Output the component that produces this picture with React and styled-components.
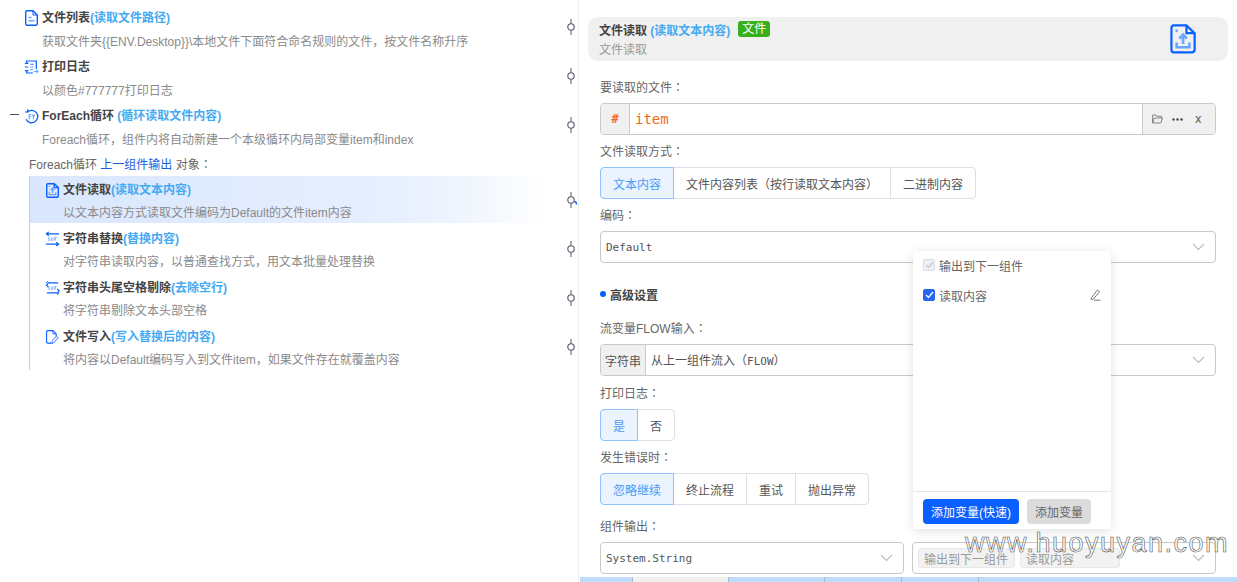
import React from 'react';
import styled, { createGlobalStyle } from 'styled-components';

const SANS = '"Liberation Sans", "Noto Sans CJK SC", sans-serif';
const MONO = '"DejaVu Sans Mono", "Noto Sans CJK SC", monospace';
const BLUE = '#0a5fff';
const LIGHT = '#6aa6ff';

const Global = createGlobalStyle`
  html, body { margin: 0; padding: 0; height: 582px; overflow: hidden; background: #fff; }
  body { font-family: ${SANS}; font-size: 12px; color: #555; }
  * { box-sizing: border-box; }
`;

const Page = styled.div`
  position: relative;
  display: flex;
  width: 1237px;
  height: 582px;
  overflow: hidden;
`;

/* ---------- left tree ---------- */
const TreePane = styled.div`
  position: relative;
  flex: 0 0 579px;
  height: 582px;
  padding-top: 7px;
  border-right: 1px solid #eeeeee;
`;
const TopRow = styled.div`
  display: flex;
  flex-direction: column;
  gap: 4px;
  margin-bottom: ${p => (p.$loop ? '1px' : '5px')};
`;
const TitleLine = styled.div`
  display: flex;
  align-items: center;
  height: 20px;
  padding-top: 2px;
  line-height: 18px;
  white-space: nowrap;
`;
const Gutter = styled.span`
  flex: 0 0 24px;
  display: flex;
  justify-content: flex-end;
  padding-right: 5px;
`;
const Dash = styled.i`
  display: block;
  width: 9px;
  height: 1px;
  background: #555;
  margin-top: -2px;
`;
const IconSlot = styled.span`
  flex: 0 0 18px;
  display: flex;
  align-items: center;
  height: 16px;
  padding-left: ${p => p.$pad || 0}px;
`;
const Title = styled.b`
  font-weight: 700;
  color: #444;
`;
const Hint = styled.span`
  font-weight: 700;
  color: #45aaf2;
`;
const Desc = styled.div`
  height: 20px;
  line-height: 22px;
  padding-left: ${p => p.$indent}px;
  color: #8a8a8a;
  white-space: nowrap;
`;
const LoopLabel = styled.div`
  height: 20px;
  line-height: 22px;
  margin: 5px 0 2px 29px;
  color: #666;
`;
const LoopLink = styled.span`
  color: #1a5fe0;
`;
const Colon = styled.span`
  font-family: "Noto Sans CJK TC", sans-serif;
  line-height: 0;
`;
const Children = styled.div`
  margin-left: 29px;
  width: 516px;
  border-left: 1px solid #b9cdf5;
`;
const ChildRow = styled.div`
  display: flex;
  flex-direction: column;
  gap: 3px;
  height: 47px;
  margin-bottom: 2px;
  padding-top: 3px;
  background: ${p => (p.$active ? 'linear-gradient(90deg, #d9e6fd 0%, #e6effe 70%, #f3f7fe 88%, #ffffff 100%)' : 'transparent')};
`;
const ChildTitle = styled(TitleLine)`
  padding-left: 15px;
`;
const Handle = styled.svg`
  position: absolute;
  left: ${p => p.$x}px;
  top: ${p => p.$y - 8}px;
`;

/* ---------- right form ---------- */
const FormPane = styled.div`
  flex: 1;
  min-width: 0;
  padding-top: 17px;
  display: flex;
  flex-direction: column;
`;
const Header = styled.div`
  display: flex;
  justify-content: space-between;
  align-items: center;
  margin: 0 9px;
  height: 44px;
  padding: 0 32px 0 11px;
  background: #f0f0f0;
  border-radius: 10px;
`;
const HeaderText = styled.div`
  display: flex;
  flex-direction: column;
  gap: 2px;
`;
const HeaderTitle = styled.div`
  display: flex;
  align-items: center;
  height: 20px;
  gap: 8px;
`;
const Tag = styled.span`
  display: inline-block;
  height: 16px;
  line-height: 16px;
  padding: 0 4px;
  border-radius: 3px;
  font-size: 12px;
  color: #fff;
  background: #38b01c;
`;
const HeaderSub = styled.div`
  color: #9a9a9a;
  line-height: 18px;
`;
const Form = styled.div`
  padding: 16px 21px 0 21px;
  display: flex;
  flex-direction: column;
`;
const Label = styled.div`
  height: 20px;
  line-height: 22px;
  color: #666;
  margin-top: ${p => p.$top || 0}px;
  margin-bottom: 6px;
`;
const Group = styled.div`
  display: flex;
  align-items: stretch;
  height: 32px;
  border: 1px solid #c9c9c9;
  border-radius: 4px;
  background: #fff;
  overflow: hidden;
`;
const HalfGroup = styled(Group)`
  flex: 1;
  min-width: 0;
`;
const Addon = styled.div`
  flex: 0 0 ${p => p.$w}px;
  display: flex;
  align-items: center;
  justify-content: center;
  background: #f0f0f0;
  color: ${p => p.$color || '#555'};
  font-family: ${p => (p.$mono ? MONO : SANS)};
  font-weight: ${p => (p.$mono ? 700 : 400)};
  border-right: 1px solid #c9c9c9;
`;
const ActionAddon = styled.div`
  flex: 0 0 73px;
  display: flex;
  align-items: center;
  gap: 9px;
  padding-left: 9px;
  background: #f0f0f0;
  color: #555;
  border-left: 1px solid #c9c9c9;
`;
const CodeInput = styled.div`
  flex: 1;
  display: flex;
  align-items: center;
  padding-left: 5px;
  font-family: ${MONO};
  font-size: 14px;
  color: #f2691f;
`;
const SelectBox = styled.div`
  position: relative;
  flex: 1;
  min-width: 0;
  display: flex;
  align-items: center;
  gap: 5px;
  padding: 0 5px;
  font-family: ${MONO};
  font-size: 11px;
  color: #555;
  white-space: pre;
`;
const FlowText = styled.span`
  margin-top: -2px;
  font-family: ${SANS};
  font-size: 12px;
`;
const FlowLatin = styled.span`
  font-family: ${MONO};
  font-size: 11px;
`;
const Chevron = styled.svg`
  margin-left: auto;
  margin-right: 5px;
  flex: none;
`;
const Radios = styled.div`
  display: inline-flex;
  align-self: flex-start;
  height: 32px;
`;
const Radio = styled.div`
  width: ${p => p.$w}px;
  display: flex;
  align-items: center;
  justify-content: center;
  border: 1px solid ${p => (p.$on ? '#8fc1fb' : '#dcdfe6')};
  margin-left: ${p => (p.$first ? 0 : -1)}px;
  position: relative;
  z-index: ${p => (p.$on ? 1 : 0)};
  background: ${p => (p.$on ? '#ebf3ff' : '#fff')};
  color: ${p => (p.$on ? '#4a9bf7' : '#555')};
  border-radius: ${p => (p.$first ? '4px 0 0 4px' : p.$last ? '0 4px 4px 0' : '0')};
`;
const Section = styled.div`
  display: flex;
  align-items: center;
  gap: 4px;
  height: 20px;
  margin: 21px 0 14px;
  font-weight: 700;
  color: #444;
`;
const Dot = styled.i`
  width: 6px;
  height: 6px;
  border-radius: 50%;
  background: ${BLUE};
`;
const TwoCols = styled.div`
  display: flex;
  gap: 8px;
`;
const OutTag = styled.span`
  display: inline-flex;
  align-items: center;
  height: 20px;
  padding: 0 5px;
  background: #f2f2f2;
  border: 1px solid #e8e8e8;
  border-radius: 3px;
  font-family: ${SANS};
  font-size: 12px;
  color: #999;
  width: ${p => p.$w}px;
`;
const Bottom = styled.div`
  display: flex;
  height: 5px;
  margin: 3px 0 0 1px;
  background: #bfdcfa;
`;
const BottomTab = styled.div`
  flex: 0 0 ${p => p.$w}px;
  background: ${p => (p.$grey ? '#f0f0f0' : 'transparent')};
  border-right: 1px solid #a9bcd0;
`;

/* ---------- popover ---------- */
const Popover = styled.div`
  position: absolute;
  left: 913px;
  top: 251px;
  width: 198px;
  height: 278px;
  display: flex;
  flex-direction: column;
  background: #fff;
  border-radius: 4px;
  box-shadow: 0 2px 12px rgba(0, 0, 0, 0.12);
  z-index: 3;
`;
const PopBody = styled.div`
  flex: 1;
  padding: 4px 10px 0;
`;
const CheckRow = styled.div`
  display: flex;
  align-items: center;
  gap: 4px;
  height: 20px;
  margin-bottom: 10px;
  color: #666;
`;
const Box = styled.span`
  flex: none;
  width: 12px;
  height: 12px;
  border-radius: 2px;
  display: flex;
  align-items: center;
  justify-content: center;
  background: ${p => (p.$disabled ? '#eef0f5' : '#2468f2')};
  border: 1px solid ${p => (p.$disabled ? '#d9dce6' : '#2468f2')};
`;
const EditIcon = styled.svg`
  margin-left: auto;
`;
const PopFoot = styled.div`
  display: flex;
  gap: 8px;
  height: 38px;
  padding: 7px 10px 0;
  border-top: 1px solid #e3e3e3;
`;
const PopButton = styled.div`
  height: 25px;
  width: ${p => p.$w}px;
  display: flex;
  align-items: center;
  justify-content: center;
  border-radius: 4px;
  background: ${p => (p.$primary ? BLUE : '#dcdcdc')};
  color: ${p => (p.$primary ? '#fff' : '#666')};
`;
const Watermark = styled.div`
  position: absolute;
  left: 965px;
  top: 527px;
  font-family: "Liberation Sans", sans-serif;
  font-size: 27px;
  line-height: 32px;
  letter-spacing: 1.5px;
  color: #fff;
  -webkit-text-stroke: 0.6px #555;
  white-space: nowrap;
  z-index: 4;
`;

/* ---------- icons ---------- */
const DocIcon = () => (
  <svg width="13" height="16" viewBox="0 0 13 16" fill="none">
    <path d="M2 .7h6l4.300 4.300v8.600a1.500 1.500 0 0 1-1.500 1.600H2A1.500 1.500 0 0 1 .7 13.600V2A1.400 1.400 0 0 1 2 .7Z" stroke={BLUE} strokeWidth="1.400" />
    <path d="M3.500 7.500h3M3.500 10.800h6" stroke={LIGHT} strokeWidth="1.400" />
    <path d="M8 1v4h4" stroke={BLUE} strokeWidth="1" />
  </svg>
);
const LogIcon = () => (
  <svg width="15" height="16" viewBox="0 0 17 16" fill="none">
    <path d="M3 4V1.200h11v9" stroke={BLUE} strokeWidth="1.400" />
    <path d="M1 4h4M1 8h4M1 12h4" stroke={BLUE} strokeWidth="1.400" />
    <path d="M3 12v2.800h7" stroke={BLUE} strokeWidth="1.400" />
    <path d="M7 5h4M7 8h4M7 11h3" stroke={LIGHT} strokeWidth="1.400" />
    <path d="M11 13h5M14.200 11.200 16 13l-1.800 1.800" stroke={LIGHT} strokeWidth="1.200" />
  </svg>
);
const LoopIcon = () => (
  <svg width="15" height="15" viewBox="0 0 16 16" fill="none">
    <path d="M3.300 3.500A6.600 6.600 0 1 1 2.200 11" stroke={BLUE} strokeWidth="1.400" />
    <path d="M1 3.200h3v-3" stroke={BLUE} strokeWidth="1.300" />
    <path d="M5.500 11V5.800h2.400M5.500 8.200h2M10 5.500V11M8.700 7h3" stroke={LIGHT} strokeWidth="1.200" />
  </svg>
);
const ReadIcon = ({ size = 15, w = 1.4 }) => (
  <svg width={size * 0.87} height={size} viewBox="0 0 13 15" fill="none">
    <path d="M1.800.7h6.400l4.100 3.900v8.200a1.400 1.400 0 0 1-1.400 1.400H1.800A1.200 1.200 0 0 1 .7 12.800V2A1.200 1.200 0 0 1 1.800.7Z" stroke={BLUE} strokeWidth={w} />
    <path d="M8.200 1v3.600h3.800" stroke={BLUE} strokeWidth={w} />
    <circle cx="3.300" cy="3.400" r=".7" fill={LIGHT} />
    <path d="M6.500 10V5.400M4.600 7.300l1.900-2 1.900 2M3.300 9.200v2.400h6.400V9.200" stroke={LIGHT} strokeWidth="1.300" />
  </svg>
);
const ReplaceIcon = ({ trim }) => (
  <svg width="15" height="16" viewBox="0 0 16 16" fill="none">
    {trim ? (
      <>
        <path d="M14 2.500H3.500L1.600 5l2 2" stroke={BLUE} strokeWidth="1.300" />
        <path d="M2 13.200h11.500L15 11l-2-2" stroke={BLUE} strokeWidth="1.300" />
        <path d="M1 2.500 3 .8M13 15l2-1.800" stroke={BLUE} strokeWidth="1" />
      </>
    ) : (
      <>
        <path d="M15 2.500H1.500M4 .5l-2.500 2L4 4.500" stroke={BLUE} strokeWidth="1.300" />
        <path d="M1 13.500h13.500M12 11.500l2.500 2-2.500 2" stroke={BLUE} strokeWidth="1.300" />
      </>
    )}
    <path d="M5 6.500H3.500v1.500H5v1.500H3.500M7 6.500v3h1.500v-3M10.500 5.500v4M12.500 6.500h-1.500v3" stroke={LIGHT} strokeWidth=".8" />
  </svg>
);
const WriteIcon = () => (
  <svg width="13" height="16" viewBox="0 0 15 16" fill="none">
    <path d="M8 15H2a1.300 1.300 0 0 1-1.300-1.300V2A1.300 1.300 0 0 1 2 .7h6l3.800 3.800V7" stroke={BLUE} strokeWidth="1.300" />
    <path d="M8 1v3.500h3.500" stroke={BLUE} strokeWidth="1" />
    <path d="M7 14.500l.5-2.500 4.500-5 2 2-4.500 5Z" stroke={LIGHT} strokeWidth="1.300" />
  </svg>
);
const Chev = () => (
  <Chevron width="13" height="8" viewBox="0 0 13 8" fill="none">
    <path d="M1 1l5.500 5.500L12 1" stroke="#b8bcc4" strokeWidth="1.100" />
  </Chevron>
);
const NodeHandle = ({ y, tail }) => (
  <Handle $x={567} $y={y} width="12" height="16" viewBox="0 0 12 16" fill="none">
    <path d="M4 0v4.500M4 11.500V16" stroke="#556" strokeWidth="1" />
    <circle cx="4" cy="8" r="3.200" stroke="#556" strokeWidth="1.100" fill="#fff" />
    {tail && <path d="M7.500 9.500c1.500 0 2 1 2 3" stroke={BLUE} strokeWidth="1.400" />}
  </Handle>
);

const Tree = () => (
  <TreePane>
    <TopRow>
      <TitleLine>
        <Gutter />
        <IconSlot $pad={1}><DocIcon /></IconSlot>
        <Title>文件列表</Title><Hint>(读取文件路径)</Hint>
      </TitleLine>
      <Desc $indent={42}>{'获取文件夹{{ENV.Desktop}}\\本地文件下面符合命名规则的文件，按文件名称升序'}</Desc>
    </TopRow>
    <TopRow>
      <TitleLine>
        <Gutter />
        <IconSlot><LogIcon /></IconSlot>
        <Title>打印日志</Title>
      </TitleLine>
      <Desc $indent={42}>以颜色#777777打印日志</Desc>
    </TopRow>
    <TopRow $loop>
      <TitleLine>
        <Gutter><Dash /></Gutter>
        <IconSlot><LoopIcon /></IconSlot>
        <Title>ForEach循环&nbsp;</Title><Hint>(循环读取文件内容)</Hint>
      </TitleLine>
      <Desc $indent={42}>Foreach循环，组件内将自动新建一个本级循环内局部变量item和index</Desc>
    </TopRow>
    <LoopLabel>Foreach循环 <LoopLink>上一组件输出</LoopLink> 对象<Colon>：</Colon></LoopLabel>
    <Children>
      <ChildRow $active>
        <ChildTitle>
          <IconSlot $pad={1}><ReadIcon /></IconSlot>
          <Title>文件读取</Title><Hint>(读取文本内容)</Hint>
        </ChildTitle>
        <Desc $indent={33}>以文本内容方式读取文件编码为Default的文件item内容</Desc>
      </ChildRow>
      <ChildRow>
        <ChildTitle>
          <IconSlot><ReplaceIcon /></IconSlot>
          <Title>字符串替换</Title><Hint>(替换内容)</Hint>
        </ChildTitle>
        <Desc $indent={33}>对字符串读取内容，以普通查找方式，用文本批量处理替换</Desc>
      </ChildRow>
      <ChildRow>
        <ChildTitle>
          <IconSlot><ReplaceIcon trim /></IconSlot>
          <Title>字符串头尾空格剔除</Title><Hint>(去除空行)</Hint>
        </ChildTitle>
        <Desc $indent={33}>将字符串剔除文本头部空格</Desc>
      </ChildRow>
      <ChildRow>
        <ChildTitle>
          <IconSlot $pad={1}><WriteIcon /></IconSlot>
          <Title>文件写入</Title><Hint>(写入替换后的内容)</Hint>
        </ChildTitle>
        <Desc $indent={33}>将内容以Default编码写入到文件item，如果文件存在就覆盖内容</Desc>
      </ChildRow>
    </Children>
    {[27, 76, 125, 200, 249, 298, 347].map((y, i) => (
      <NodeHandle key={y} y={y} tail={i === 3} />
    ))}
  </TreePane>
);

const RadioSet = ({ items }) => (
  <Radios>
    {items.map(([text, w], i) => (
      <Radio key={text} $w={w} $on={i === 0} $first={i === 0} $last={i === items.length - 1}>{text}</Radio>
    ))}
  </Radios>
);

const Right = () => (
  <FormPane>
    <Header>
      <HeaderText>
        <HeaderTitle>
          <span><Title>文件读取</Title>&nbsp;<Hint>(读取文本内容)</Hint></span>
          <Tag>文件</Tag>
        </HeaderTitle>
        <HeaderSub>文件读取</HeaderSub>
      </HeaderText>
      <ReadIcon size={30} w={1.1} />
    </Header>
    <Form>
      <Label>要读取的文件<Colon>：</Colon></Label>
      <Group>
        <Addon $w={29} $mono $color="#f2691f">#</Addon>
        <CodeInput>item</CodeInput>
        <ActionAddon>
          <svg width="11" height="10" viewBox="0 0 11 10" fill="none">
            <path d="M.6 9V1h3.200l1 1.300h4.700V4M.6 9h8.200l1.700-5H2.300L.6 9Z" stroke="#777" strokeWidth=".9" />
          </svg>
          <svg width="11" height="3" viewBox="0 0 11 3"><g fill="#445"><circle cx="1.500" cy="1.500" r="1.200" /><circle cx="5.500" cy="1.500" r="1.200" /><circle cx="9.500" cy="1.500" r="1.200" /></g></svg>
          <span>&nbsp;x</span>
        </ActionAddon>
      </Group>
      <Label $top={6}>文件读取方式<Colon>：</Colon></Label>
      <RadioSet items={[['文本内容', 74], ['文件内容列表（按行读取文本内容）', 218], ['二进制内容', 86]]} />
      <Label $top={6}>编码<Colon>：</Colon></Label>
      <Group><SelectBox>Default<Chev /></SelectBox></Group>
      <Section><Dot />高级设置</Section>
      <Label>流变量FLOW输入<Colon>：</Colon></Label>
      <Group>
        <Addon $w={45}>字符串</Addon>
        <SelectBox><FlowText>从上一组件流入（<FlowLatin>FLOW</FlowLatin>）</FlowText><Chev /></SelectBox>
      </Group>
      <Label $top={7}>打印日志<Colon>：</Colon></Label>
      <RadioSet items={[['是', 38], ['否', 38]]} />
      <Label $top={6}>发生错误时<Colon>：</Colon></Label>
      <RadioSet items={[['忽略继续', 74], ['终止流程', 74], ['重试', 50], ['抛出异常', 74]]} />
      <Label $top={11}>组件输出<Colon>：</Colon></Label>
      <TwoCols>
        <HalfGroup><SelectBox>System.String<Chev /></SelectBox></HalfGroup>
        <HalfGroup>
          <SelectBox>
            <OutTag $w={97}>输出到下一组件</OutTag>
            <OutTag $w={100}>读取内容</OutTag>
            <Chev />
          </SelectBox>
        </HalfGroup>
      </TwoCols>
    </Form>
    <Bottom>
      <BottomTab $w={53} />
      <BottomTab $w={96} $grey />
      <BottomTab $w={96} />
      <BottomTab $w={77} />
      <BottomTab $w={77} />
    </Bottom>
  </FormPane>
);

export default function App() {
  return (
    <Page>
      <Global />
      <Tree />
      <Right />
      <Popover>
        <PopBody>
          <CheckRow>
            <Box $disabled>
              <svg width="9" height="8" viewBox="0 0 9 8" fill="none"><path d="M1 4l2.500 2.500L8 1" stroke="#c4c8d2" strokeWidth="1.200" /></svg>
            </Box>
            输出到下一组件
          </CheckRow>
          <CheckRow>
            <Box>
              <svg width="9" height="8" viewBox="0 0 9 8" fill="none"><path d="M1 4l2.500 2.500L8 1" stroke="#fff" strokeWidth="1.200" /></svg>
            </Box>
            读取内容
            <EditIcon width="11" height="12" viewBox="0 0 11 12" fill="none">
              <path d="M1.500 8.500 7.500 1l2 1.500-6 7.500-2.300.6.300-2.100Z" stroke="#777" strokeWidth="1" />
              <path d="M4 11.200h6.500" stroke="#777" strokeWidth="1" />
            </EditIcon>
          </CheckRow>
        </PopBody>
        <PopFoot>
          <PopButton $primary $w={96}>添加变量(快速)</PopButton>
          <PopButton $w={64}>添加变量</PopButton>
        </PopFoot>
      </Popover>
      <Watermark>www.huoyuyan.com</Watermark>
    </Page>
  );
}
